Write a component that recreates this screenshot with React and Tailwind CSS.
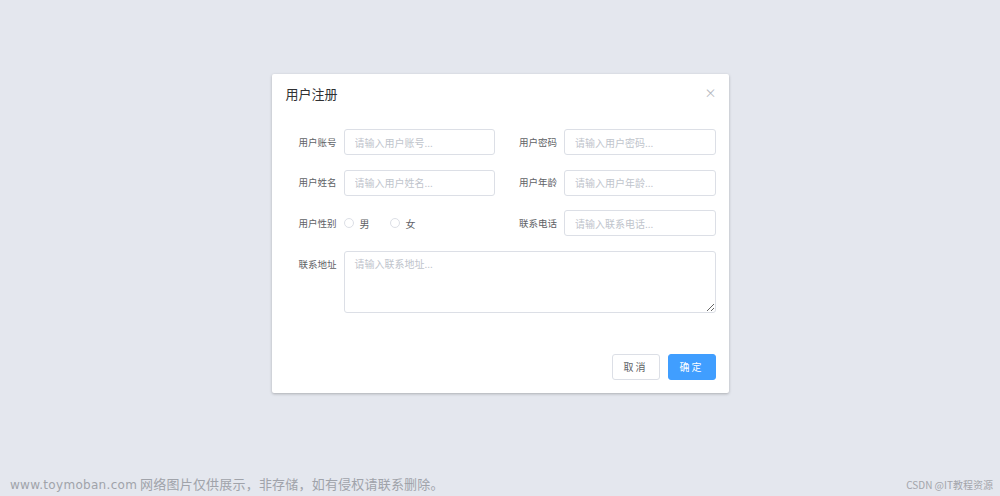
import { useState } from "react";

const font = { fontFamily: '"Noto Sans CJK SC", "Noto Sans", sans-serif' };

const Field = ({ label, placeholder }) => (
  <div className="flex items-center">
    <label className="w-[58px] shrink-0 pr-[7px] text-right text-[9.5px] text-[#606266]">
      {label}
    </label>
    <input
      className="h-[26px] flex-1 min-w-0 rounded-[3px] border border-[#dcdfe6] bg-white px-[10px] text-[10px] text-[#606266] outline-none placeholder:text-[#c0c4cc]"
      placeholder={placeholder}
    />
  </div>
);

const Radio = ({ label, checked, onClick }) => (
  <button onClick={onClick} className="flex items-center gap-[6px] text-[10px] text-[#606266]">
    <span
      className={`h-[10px] w-[10px] rounded-full border ${
        checked ? "border-[#409eff] bg-[#409eff]" : "border-[#dcdfe6] bg-white"
      }`}
    />
    <span>{label}</span>
  </button>
);

export default function App() {
  const [gender, setGender] = useState("");

  return (
    <div style={font} className="relative h-[496px] w-full overflow-hidden bg-[#e4e7ee]">
      <div className="mx-auto mt-[74px] w-[457px] rounded-[2px] bg-white shadow-[0_1px_3px_rgba(0,0,0,0.25)]">
        {/* header */}
        <div className="relative px-[14px] pt-[10px]">
          <h2 className="text-[13px] leading-[20px] text-[#303133]">用户注册</h2>
          <button className="absolute right-[12px] top-[13px] text-[12px] leading-none text-[#b4b7be]">
            ×
          </button>
        </div>

        {/* form */}
        <div className="pl-[14px] pr-[13px] pt-[25px]">
          <div className="grid grid-cols-2 gap-x-[11px] gap-y-[14.5px]">
            <Field label="用户账号" placeholder="请输入用户账号..." />
            <Field label="用户密码" placeholder="请输入用户密码..." />
            <Field label="用户姓名" placeholder="请输入用户姓名..." />
            <Field label="用户年龄" placeholder="请输入用户年龄..." />
            <div className="flex h-[26px] items-center">
              <label className="w-[58px] shrink-0 pr-[7px] text-right text-[9.5px] text-[#606266]">
                用户性别
              </label>
              <div className="flex items-center gap-[20px]">
                <Radio label="男" checked={gender === "m"} onClick={() => setGender("m")} />
                <Radio label="女" checked={gender === "f"} onClick={() => setGender("f")} />
              </div>
            </div>
            <Field label="联系电话" placeholder="请输入联系电话..." />
          </div>

          <div className="mt-[14.5px] flex">
            <label className="w-[58px] shrink-0 pr-[7px] text-right text-[9.5px] leading-[26px] text-[#606266]">
              联系地址
            </label>
            <textarea
              className="h-[62px] flex-1 rounded-[3px] border border-[#dcdfe6] px-[10px] py-[4px] text-[10px] text-[#606266] outline-none placeholder:text-[#c0c4cc]"
              placeholder="请输入联系地址..."
            />
          </div>
        </div>

        {/* footer */}
        <div className="flex justify-end gap-[8px] px-[13px] pb-[13px] pt-[41px]">
          <button className="h-[26px] w-[48px] rounded-[3px] border border-[#dcdfe6] bg-white text-[10px] tracking-[2px] text-[#606266]">
            取消
          </button>
          <button className="h-[26px] w-[48px] rounded-[3px] border border-[#409eff] bg-[#409eff] text-[10px] tracking-[2px] text-white">
            确定
          </button>
        </div>
      </div>

      <div className="absolute bottom-0 left-0 flex w-full items-end justify-between pl-[10px] pr-[7px] pb-[2px]">
        <span className="text-[13px] leading-[18px] text-[#a0a3aa]">
          <span
            style={{ fontFamily: '"DejaVu Sans", sans-serif' }}
            className="text-[12px] tracking-[0.3px]"
          >
            www.toymoban.com
          </span>{" "}
          <span className="tracking-[0.2px]">网络图片仅供展示，非存储，如有侵权请联系删除。</span>
        </span>
        <span className="pb-[2px] text-[10px] text-[#a3a5ab]">CSDN @IT教程资源</span>
      </div>
    </div>
  );
}
